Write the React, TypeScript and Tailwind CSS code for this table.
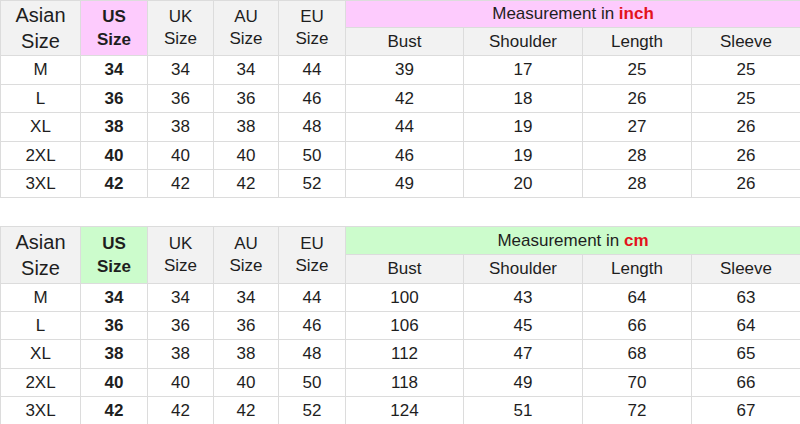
const sizes = ['M', 'L', 'XL', '2XL', '3XL'];
const us = ['34', '36', '38', '40', '42'];
const eu = ['44', '46', '48', '50', '52'];

const inchRows = [
  ['39', '17', '25', '25'],
  ['42', '18', '26', '25'],
  ['44', '19', '27', '26'],
  ['46', '19', '28', '26'],
  ['49', '20', '28', '26'],
];

const cmRows = [
  ['100', '43', '64', '63'],
  ['106', '45', '66', '64'],
  ['112', '47', '68', '65'],
  ['118', '49', '70', '66'],
  ['124', '51', '72', '67'],
];

const cell = 'border border-[#dcdcdc] text-center align-middle p-0';

function SizeTable({
  accent,
  unit,
  rows,
  heights,
  headTop,
  headBottom,
}: {
  accent: string;
  unit: string;
  rows: string[][];
  heights: string[];
  headTop: string;
  headBottom: string;
}) {
  return (
    <table className="w-[800px] table-fixed border-collapse text-[17px] text-[#1e1e1e]">
      <colgroup>
        <col className="w-[80px]" />
        <col className="w-[67px]" />
        <col className="w-[66px]" />
        <col className="w-[65px]" />
        <col className="w-[67px]" />
        <col className="w-[118px]" />
        <col className="w-[119px]" />
        <col className="w-[109px]" />
        <col className="w-[109px]" />
      </colgroup>
      <thead>
        <tr className={headTop}>
          <th rowSpan={2} className={`${cell} bg-[#f2f2f2] font-normal text-[20px] leading-[26px]`}>
            Asian
            <br />
            Size
          </th>
          <th rowSpan={2} className={`${cell} ${accent} font-bold leading-[23px]`}>
            US
            <br />
            Size
          </th>
          <th rowSpan={2} className={`${cell} bg-[#f2f2f2] font-normal leading-[22px]`}>
            UK
            <br />
            Size
          </th>
          <th rowSpan={2} className={`${cell} bg-[#f2f2f2] font-normal leading-[22px]`}>
            AU
            <br />
            Size
          </th>
          <th rowSpan={2} className={`${cell} bg-[#f2f2f2] font-normal leading-[22px]`}>
            EU
            <br />
            Size
          </th>
          <th colSpan={4} className={`${cell} ${accent} font-normal`}>
            Measurement in <span className="font-bold text-[#e3131c]">{unit}</span>
          </th>
        </tr>
        <tr className={headBottom}>
          {['Bust', 'Shoulder', 'Length', 'Sleeve'].map((h) => (
            <th key={h} className={`${cell} bg-[#f2f2f2] font-normal`}>
              {h}
            </th>
          ))}
        </tr>
      </thead>
      <tbody>
        {rows.map((r, i) => (
          <tr key={sizes[i]} className={heights[i]}>
            <td className={cell}>{sizes[i]}</td>
            <td className={`${cell} font-bold`}>{us[i]}</td>
            <td className={cell}>{us[i]}</td>
            <td className={cell}>{us[i]}</td>
            <td className={cell}>{eu[i]}</td>
            {r.map((v, j) => (
              <td key={j} className={cell}>
                {v}
              </td>
            ))}
          </tr>
        ))}
      </tbody>
    </table>
  );
}

export default function App() {
  return (
    <div className="w-[800px] h-[424px] overflow-hidden bg-white font-['Liberation_Sans',Arial,sans-serif]">
      <SizeTable
        accent="bg-[#fdcbfd]"
        unit="inch"
        rows={inchRows}
        headTop="h-[27px]"
        headBottom="h-[28px]"
        heights={['h-[29px]', 'h-[28px]', 'h-[29px]', 'h-[28px]', 'h-[28px]']}
      />
      <div className="h-[28px]" />
      <SizeTable
        accent="bg-[#ccfccc]"
        unit="cm"
        rows={cmRows}
        headTop="h-[28px]"
        headBottom="h-[29px]"
        heights={['h-[28px]', 'h-[28px]', 'h-[29px]', 'h-[28px]', 'h-[28px]']}
      />
    </div>
  );
}
